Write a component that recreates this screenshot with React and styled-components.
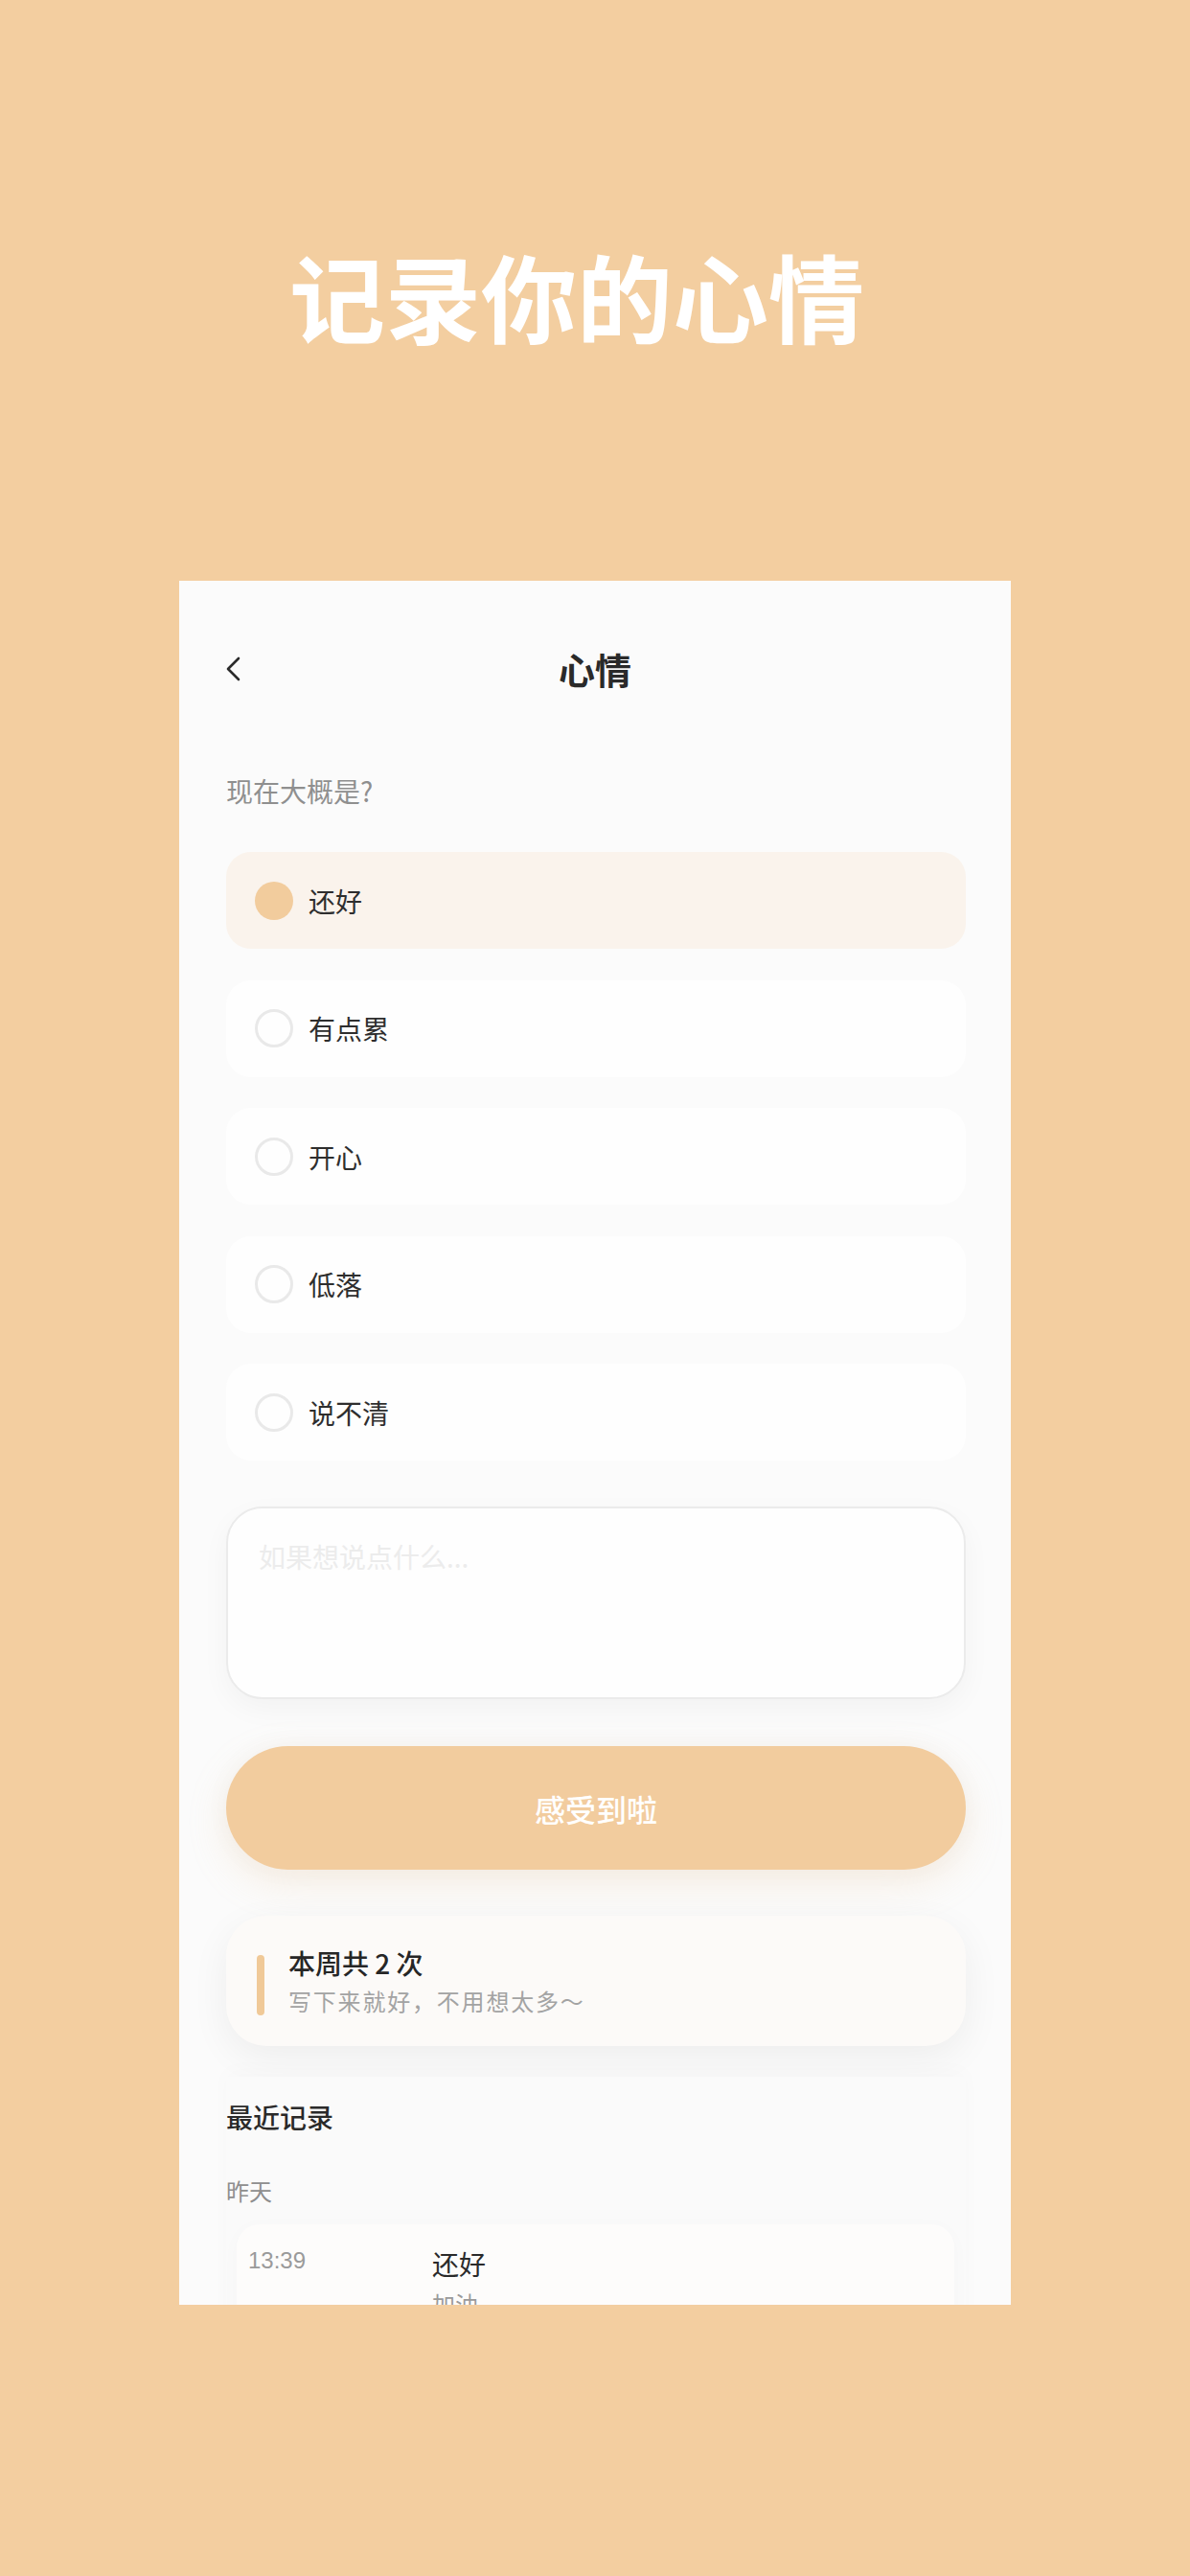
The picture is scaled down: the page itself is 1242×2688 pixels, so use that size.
import React, { useState } from "react";
import styled, { createGlobalStyle } from "styled-components";

const GlobalStyle = createGlobalStyle`
  html, body {
    margin: 0;
    padding: 0;
    background: #f3cea0;
  }
  body {
    font-family: "Noto Sans CJK SC", "Noto Sans", sans-serif;
  }
  * {
    box-sizing: border-box;
  }
`;

const MOODS = ["还好", "有点累", "开心", "低落", "说不清"];

function App() {
  const [mood, setMood] = useState(0);

  return (
    <Page>
      <GlobalStyle />
      <Hero>
        <HeroTitle>记录你的心情</HeroTitle>
      </Hero>
      <Phone>
        <NavBar>
          <BackButton aria-label="返回">
            <svg width="16" height="26" viewBox="0 0 16 26" fill="none">
              <polyline
                points="14,2 3,13 14,24"
                stroke="#2b2b2b"
                strokeWidth="2.6"
                strokeLinecap="round"
                strokeLinejoin="round"
              />
            </svg>
          </BackButton>
          <NavTitle>心情</NavTitle>
          <span />
        </NavBar>

        <Body>
          <Question>现在大概是?</Question>
          <OptionList>
            {MOODS.map((m, i) => (
              <Option key={m} $active={mood === i} onClick={() => setMood(i)}>
                <Radio $active={mood === i} />
                <OptionText>{m}</OptionText>
              </Option>
            ))}
          </OptionList>

          <NoteBox placeholder="如果想说点什么..." />

          <SubmitButton>感受到啦</SubmitButton>

          <StatsCard>
            <Accent />
            <StatsText>
              <StatsTitle>本周共 2 次</StatsTitle>
              <StatsHint>写下来就好，不用想太多～</StatsHint>
            </StatsText>
          </StatsCard>

          <RecentPanel>
            <SectionTitle>最近记录</SectionTitle>
            <DayLabel>昨天</DayLabel>
            <RecordCard>
              <RecordTime>13:39</RecordTime>
              <RecordBody>
                <RecordMood>还好</RecordMood>
                <RecordNote>加油</RecordNote>
              </RecordBody>
            </RecordCard>
          </RecentPanel>
        </Body>
      </Phone>
    </Page>
  );
}

const Page = styled.div`
  width: 1242px;
  height: 2688px;
  background: #f3cea0;
  overflow: hidden;
`;

const Hero = styled.div`
  height: 606px;
  padding-top: 258px;
  padding-right: 38px;
`;

const HeroTitle = styled.h1`
  margin: 0;
  text-align: center;
  color: #ffffff;
  font-size: 100px;
  line-height: 100px;
  font-weight: 700;
`;

const Phone = styled.div`
  margin-left: 187px;
  width: 868px;
  height: 1799px;
  background: #fbfbfb;
  overflow: hidden;
`;

const NavBar = styled.div`
  height: 184px;
  padding: 0 49px;
  display: grid;
  grid-template-columns: 1fr auto 1fr;
  align-items: center;
`;

const BackButton = styled.div`
  display: flex;
  align-items: center;
  justify-self: start;
  margin-left: -1px;
`;

const NavTitle = styled.div`
  font-size: 38px;
  font-weight: 700;
  color: #2a2a2a;
  line-height: 1;
`;

const Body = styled.div`
  padding: 0 47px 0 49px;
  display: flex;
  flex-direction: column;
`;

const Question = styled.div`
  margin-top: 15px;
  font-size: 28px;
  line-height: 40px;
  color: #8f8f8f;
`;

const OptionList = styled.div`
  margin-top: 44px;
  display: flex;
  flex-direction: column;
  gap: 32.5px;
`;

const Option = styled.div`
  height: 101px;
  border-radius: 26px;
  background: ${(p) => (p.$active ? "#faf3ec" : "#fefefe")};
  display: flex;
  align-items: center;
  padding-left: 30px;
  gap: 16px;
  cursor: pointer;
`;

const Radio = styled.span`
  width: 40px;
  height: 40px;
  border-radius: 50%;
  flex-shrink: 0;
  background: ${(p) => (p.$active ? "#f2cc9d" : "transparent")};
  border: ${(p) => (p.$active ? "none" : "3px solid #e9e9e9")};
`;

const OptionText = styled.span`
  font-size: 28px;
  line-height: 1;
  color: #2e2e2e;
`;

const NoteBox = styled.textarea`
  margin-top: 48px;
  height: 201px;
  width: 100%;
  resize: none;
  border: 2px solid #ebebeb;
  border-radius: 38px;
  background: #fefefe;
  box-shadow: 0 10px 30px rgba(0, 0, 0, 0.04);
  padding: 30px 32px;
  font-family: inherit;
  font-size: 28px;
  line-height: 40px;
  color: #333;
  outline: none;

  &::placeholder {
    color: #ececec;
  }
`;

const SubmitButton = styled.button`
  margin-top: 49px;
  height: 129px;
  width: 100%;
  border: none;
  border-radius: 65px;
  background: #f2cc9e;
  box-shadow: 0 14px 40px rgba(232, 190, 140, 0.22),
    0 0 30px rgba(0, 0, 0, 0.03);
  color: #ffffff;
  font-family: inherit;
  font-size: 32px;
  font-weight: 500;
  cursor: pointer;
`;

const StatsCard = styled.div`
  margin-top: 48px;
  height: 136px;
  border-radius: 42px;
  background: #fcfaf8;
  box-shadow: 0 12px 40px rgba(0, 0, 0, 0.06);
  display: flex;
  align-items: center;
  padding-left: 32px;
  gap: 25px;
`;

const Accent = styled.span`
  width: 8px;
  height: 63px;
  border-radius: 4px;
  background: #f0c998;
  margin-top: 8px;
  flex-shrink: 0;
`;

const StatsText = styled.div`
  display: flex;
  flex-direction: column;
  gap: 4px;
`;

const StatsTitle = styled.div`
  font-size: 28px;
  line-height: 38px;
  font-weight: 500;
  color: #262626;
`;

const StatsHint = styled.div`
  font-size: 24px;
  line-height: 34px;
  letter-spacing: 1.8px;
  color: #a3a3a3;
`;

const RecentPanel = styled.div`
  margin-top: 32px;
  background: #fafafa;
  box-shadow: 0 -6px 20px rgba(0, 0, 0, 0.02);
  display: flex;
  flex-direction: column;
  min-height: 400px;
`;

const SectionTitle = styled.div`
  margin-top: 22px;
  font-size: 28px;
  line-height: 40px;
  color: #2a2a2a;
  font-weight: 500;
`;

const DayLabel = styled.div`
  margin-top: 40px;
  font-size: 24px;
  line-height: 34px;
  color: #8e8e8e;
`;

const RecordCard = styled.div`
  margin: 18px 12px 0 11px;
  border-radius: 24px;
  background: #fdfcfb;
  box-shadow: 0 4px 20px rgba(0, 0, 0, 0.025);
  display: flex;
  padding: 20px 12px 20px 12px;
  min-height: 160px;
`;

const RecordTime = styled.div`
  width: 192px;
  font-size: 24px;
  line-height: 36px;
  color: #9a9a9a;
  font-family: "Liberation Sans", "Noto Sans", sans-serif;
`;

const RecordBody = styled.div`
  display: flex;
  flex-direction: column;
  gap: 4px;
`;

const RecordMood = styled.div`
  font-size: 28px;
  line-height: 42px;
  color: #2a2a2a;
`;

const RecordNote = styled.div`
  font-size: 24px;
  line-height: 34px;
  color: #9a9a9a;
`;

export default App;
